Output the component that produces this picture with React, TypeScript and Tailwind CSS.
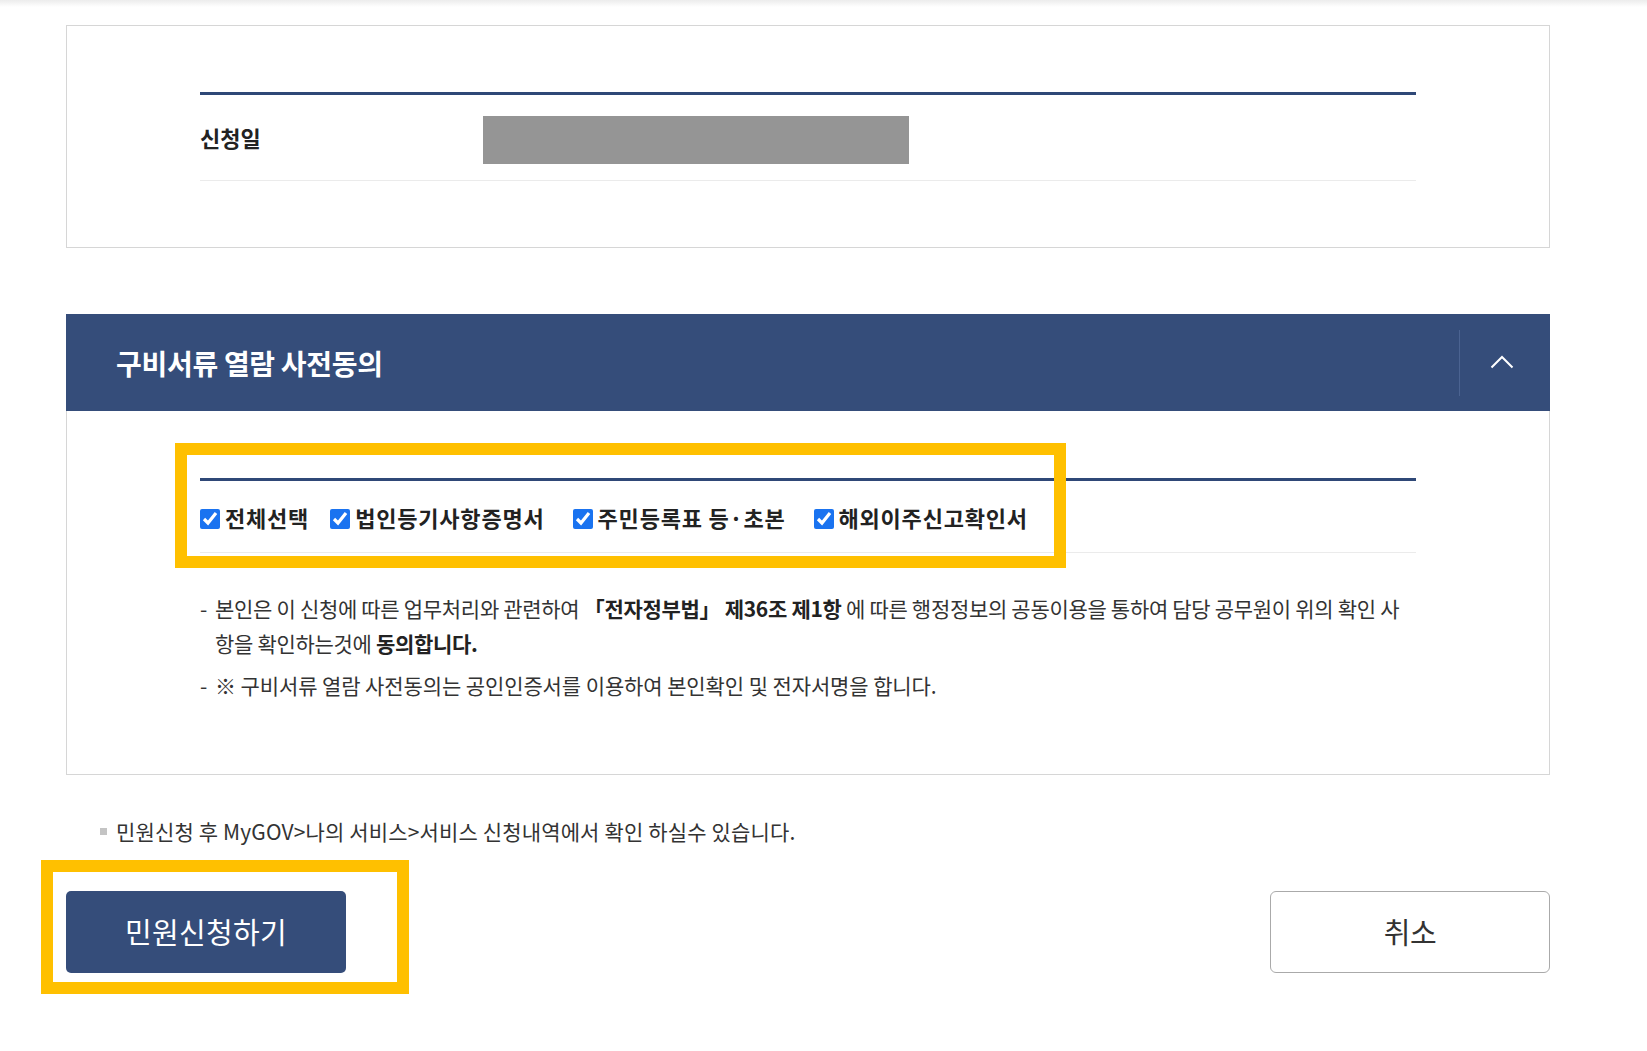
import React from 'react';

const font = { fontFamily: '"Noto Sans CJK KR", "Noto Sans", sans-serif' };

const documents = ['전체선택', '법인등기사항증명서', '주민등록표 등·초본', '해외이주신고확인서'];

function ChevronUp() {
  return (
    <svg width="24" height="14" viewBox="0 0 24 14" fill="none">
      <path d="M1.5 12.5 L12 2 L22.5 12.5" stroke="white" strokeWidth="2" />
    </svg>
  );
}

export default function App() {
  return (
    <div className="min-h-[1051px] bg-white text-[#222]" style={font}>
      {/* 상단 그림자 */}
      <div className="h-[7px] bg-gradient-to-b from-[#ececec] to-white" />

      <div className="ml-[66px] w-[1484px] pt-[18px]">
        {/* 신청일 */}
        <div className="border border-[#d6d6d6] px-[133px] pt-[66px] pb-[66px]">
          <div className="border-t-[3px] border-[#2f4877]" />
          <div className="flex h-[86px] items-center border-b border-[#ebebeb]">
            <div className="w-[283px] text-[22px] font-bold tracking-[0px] text-[#222]">신청일</div>
            <div className="mt-[4px] h-[48px] w-[426px] bg-[#959595]" />
          </div>
        </div>

        {/* 구비서류 열람 사전동의 */}
        <div className="mt-[66px]">
          <div className="flex h-[97px] items-center bg-[#354d7a]">
            <h2 className="flex-1 pl-[50px] text-[28px] font-bold tracking-[-0.3px] text-white">
              구비서류 열람 사전동의
            </h2>
            <div className="h-[66px] w-px bg-[#4b6391]" />
            <button className="flex h-full w-[84px] items-center justify-center pb-[1px]">
              <ChevronUp />
            </button>
            <div className="w-[6px]" />
          </div>

          <div className="border border-t-0 border-[#d6d6d6] px-[133px] pt-[67px] pb-[71px]">
            <div className="relative">
              <div className="border-t-[3px] border-[#2f4877]" />
              <div className="flex h-[72px] items-center border-b border-[#ebebeb] pt-[2px]">
                {documents.map((doc, i) => (
                  <label
                    key={doc}
                    className={`flex items-center gap-[5px] ${i === 0 ? 'mr-[21px]' : i === 1 || i === 2 ? 'mr-[28px]' : ''}`}
                  >
                    <input type="checkbox" defaultChecked className="mt-[3px] h-[20px] w-[20px] accent-[#1a73f0]" />
                    <span className="text-[22px] font-bold tracking-[0.8px] text-[#222]">{doc}</span>
                  </label>
                ))}
              </div>
              {/* 강조 표시 */}
              <div className="pointer-events-none absolute left-[-25px] top-[-35px] h-[125px] w-[891px] border-[12px] border-[#ffc000]" />
            </div>

            <ul className="mt-[38px] space-y-[7px] text-[21px] leading-[35px] tracking-[-0.3px] text-[#333]">
              <li className="flex">
                <span className="w-[15px] shrink-0">-</span>
                <span className="whitespace-nowrap">
                  본인은 이 신청에 따른 업무처리와 관련하여 <b className="text-[#222]">「전자정부법」 제36조 제1항</b> 에 따른
                  행정정보의 공동이용을 통하여 담당 공무원이 위의 확인 사
                  <br />
                  항을 확인하는것에 <b className="text-[#222]">동의합니다.</b>
                </span>
              </li>
              <li className="flex">
                <span className="w-[15px] shrink-0">-</span>
                <span className="whitespace-nowrap tracking-[-0.1px]">
                  ※ 구비서류 열람 사전동의는 공인인증서를 이용하여 본인확인 및 전자서명을 합니다.
                </span>
              </li>
            </ul>
          </div>
        </div>

        {/* 안내 문구 */}
        <p className="mt-[41px] flex items-center pl-[34px] text-[21px] leading-[30px] tracking-[0.15px] text-[#333]">
          <span className="mr-[9px] inline-block h-[7px] w-[7px] bg-[#c4c4c4]" />
          민원신청 후 MyGOV&gt;나의 서비스&gt;서비스 신청내역에서 확인 하실수 있습니다.
        </p>

        {/* 버튼 */}
        <div className="mt-[45px] flex justify-between">
          <div className="relative">
            <button className="h-[82px] w-[280px] rounded-[5px] bg-[#354d7a] text-[29px] tracking-[0.3px] text-white">
              민원신청하기
            </button>
            <div className="pointer-events-none absolute left-[-25px] top-[-31px] h-[134px] w-[368px] border-[12px] border-[#ffc000]" />
          </div>
          <button className="h-[82px] w-[280px] rounded-[6px] border border-[#aaaaaa] bg-white text-[29px] tracking-[-0.5px] text-[#333]">
            취소
          </button>
        </div>
      </div>
    </div>
  );
}
